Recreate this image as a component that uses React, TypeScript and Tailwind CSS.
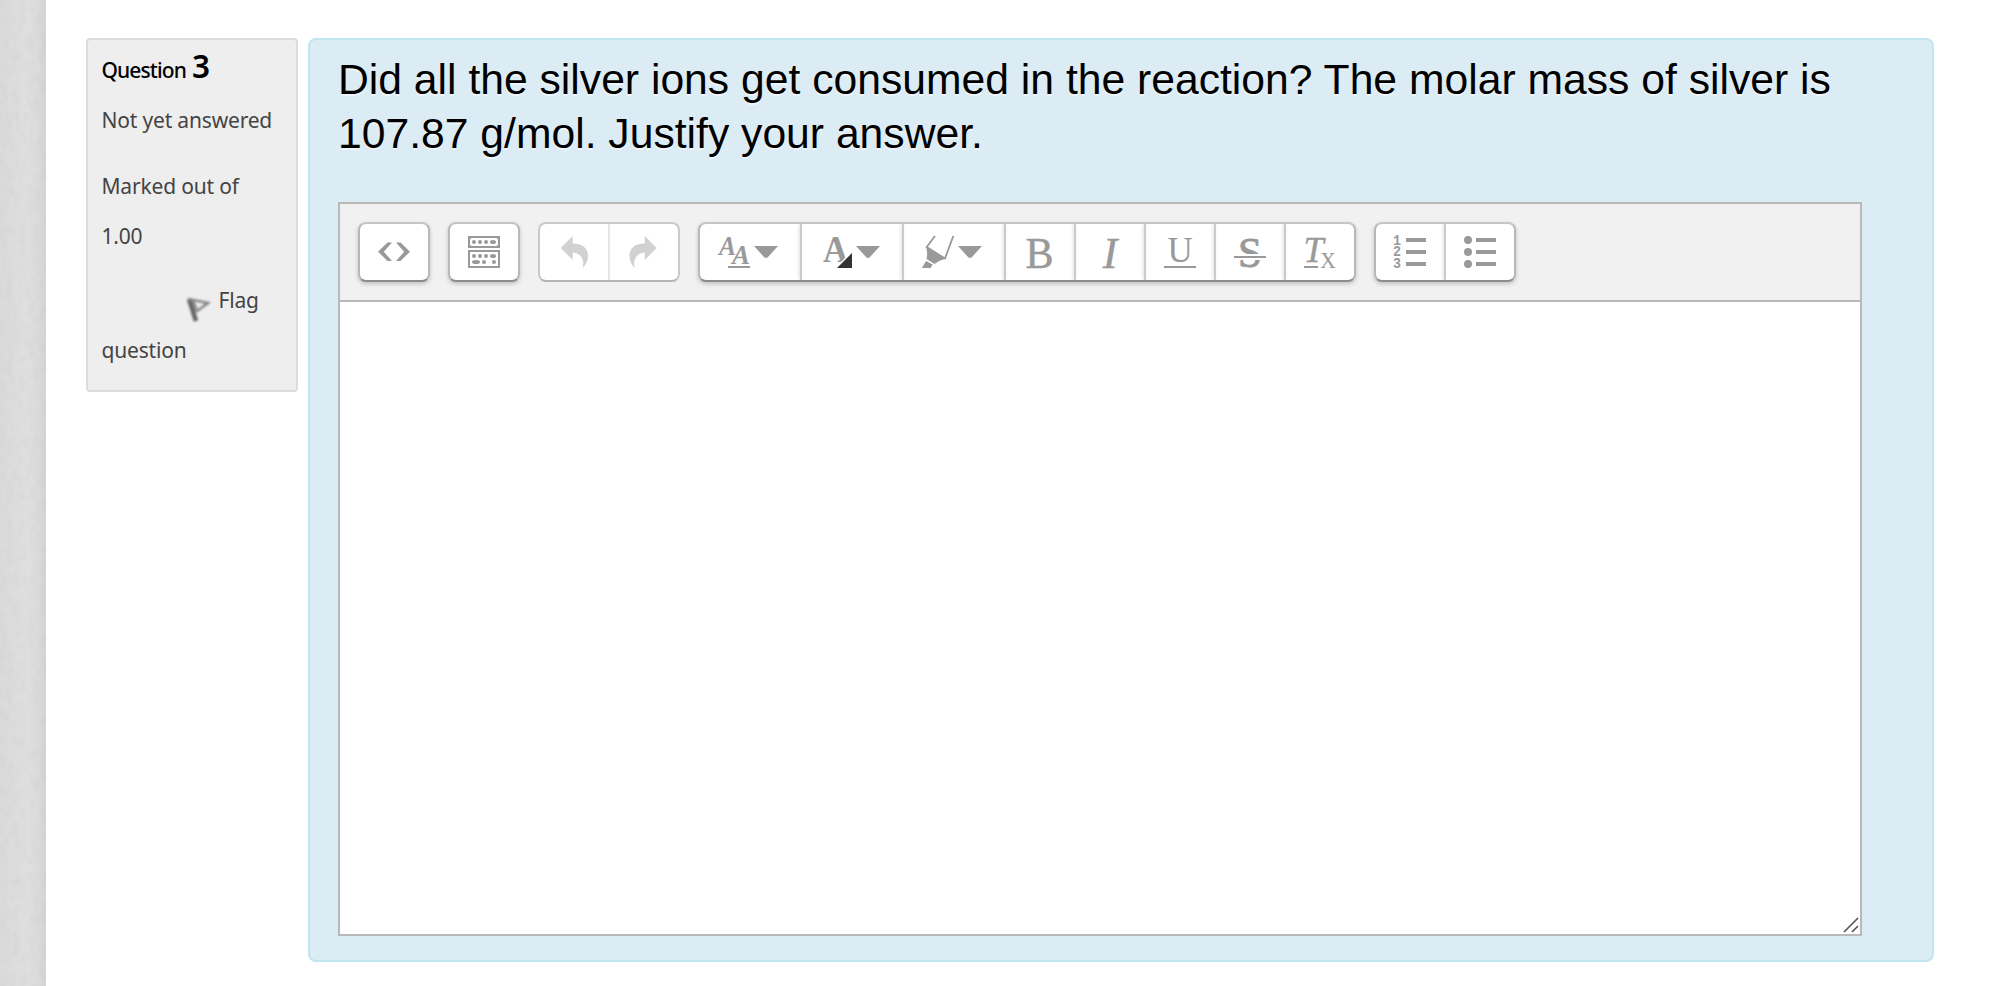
import type { ReactNode } from 'react'

// 按钮图标画布，坐标与按钮内部区域一致
function Icon({ wide, children }: { wide?: boolean; children: ReactNode }) {
  const width = wide ? 100 : 68
  return (
    <svg
      width={width}
      height={56}
      viewBox={`0 0 ${width} 56`}
      fill="currentColor"
      className="block font-['Liberation_Serif',serif]"
    >
      {children}
    </svg>
  )
}

const Caret = () => <path d="M54 22H78L68 33Q66 35 64 33Z" />

const undoPath = 'M20.7 24 32.7 12V19.5C42 19.5 48 24 48 32C48 37 45.5 41 42.7 44C44.5 36 42 29.5 32.7 28.5V36Z'

const CodeIcon = () => (
  <Icon>
    <path d="M18 27.7 27.5 18.5H32L23.8 27.7 32 37H27.5Z" />
    <path d="M50 27.7 40.5 18.5H36L44.2 27.7 36 37H40.5Z" />
  </Icon>
)

const ToggleIcon = () => (
  <Icon>
    <path fillRule="evenodd" d="M18 12H50V24H18ZM22 14Q20 14 20 16V20Q20 22 22 22H46Q48 22 48 20V16Q48 14 46 14Z" />
    <path fillRule="evenodd" d="M18 26H50V44H18ZM20 28V42H48V28Z" />
    <circle cx="24" cy="18" r="2" />
    <circle cx="30" cy="18" r="2" />
    <circle cx="36" cy="18" r="2" />
    <ellipse cx="43" cy="18" rx="3" ry="2" />
    <circle cx="24" cy="32" r="2" />
    <circle cx="30" cy="32" r="2" />
    <circle cx="36" cy="32" r="2" />
    <ellipse cx="43" cy="32" rx="3" ry="2" />
    <ellipse cx="26" cy="38" rx="4" ry="2" />
    <circle cx="34" cy="38" r="2" />
    <circle cx="44" cy="38" r="2" />
  </Icon>
)

const UndoIcon = () => (
  <Icon>
    <path d={undoPath} />
  </Icon>
)

const RedoIcon = () => (
  <Icon>
    <path d={undoPath} transform="translate(67.4 0) scale(-1 1)" />
  </Icon>
)

const FontSizeIcon = () => (
  <Icon wide>
    <text x="19" y="31" fontSize="28" fontWeight="bold" fontStyle="italic" textLength="17" lengthAdjust="spacingAndGlyphs">A</text>
    <text x="32" y="40" fontSize="28" fontWeight="bold" fontStyle="italic" textLength="18" lengthAdjust="spacingAndGlyphs">A</text>
    <path d="M28 42H50V44H28Z" />
    <Caret />
  </Icon>
)

const FontColorIcon = () => (
  <Icon wide>
    <text x="21" y="38" fontSize="37" fontWeight="bold" textLength="25" lengthAdjust="spacingAndGlyphs">A</text>
    <path fill="#fff" d="M33 44 50 27V44Z" />
    <path fill="#333" d="M35 44 50 29V44Z" />
    <Caret />
  </Icon>
)

const HighlightIcon = () => (
  <Icon wide>
    <path fill="none" stroke="currentColor" strokeWidth="1.8" d="M31 12 22.7 23 41 34.5 49.3 12" />
    <path d="M22 22.5 42 34.5Q36 36 30.5 40L22.5 35Q24 29 22 22.5Z" />
    <path d="M18 44 22 37 28.7 40.5 26.7 44Z" />
    <Caret />
  </Icon>
)

const BoldIcon = () => (
  <Icon>
    <text x="19.5" y="43.7" fontSize="44" textLength="28" lengthAdjust="spacingAndGlyphs" stroke="currentColor" strokeWidth="0.5">B</text>
  </Icon>
)

const ItalicIcon = () => (
  <Icon>
    <text x="26.8" y="43.7" fontSize="44" fontStyle="italic" stroke="currentColor" strokeWidth="0.4">I</text>
  </Icon>
)

const UnderlineIcon = () => (
  <Icon>
    <text x="21.5" y="37.5" fontSize="35">U</text>
    <path d="M18 42H50V44H18Z" />
  </Icon>
)

const StrikeIcon = () => (
  <Icon>
    <text x="22" y="43" fontSize="43" stroke="currentColor" strokeWidth="0.9">S</text>
    <path fill="#fff" d="M18 30H50V36H18Z" />
    <path d="M18 32H50V34H18Z" />
  </Icon>
)

const ClearIcon = () => (
  <Icon>
    <text x="17.5" y="38" fontSize="36" fontStyle="italic" stroke="currentColor" strokeWidth="0.4">T</text>
    <path d="M18 42H32V44H18Z" />
    <text x="34.3" y="44" fontSize="23" textLength="15.5" lengthAdjust="spacingAndGlyphs">X</text>
  </Icon>
)

const NumberedIcon = () => (
  <Icon>
    <g className="font-['Liberation_Mono',monospace] font-bold" fontSize="14">
      <text x="17" y="20.5" textLength="8" lengthAdjust="spacingAndGlyphs">1</text>
      <text x="17" y="32" textLength="8" lengthAdjust="spacingAndGlyphs">2</text>
      <text x="17" y="44" textLength="8" lengthAdjust="spacingAndGlyphs">3</text>
    </g>
    <path d="M30 14H50V18H30ZM30 26H50V30H30ZM30 38H50V42H30Z" />
  </Icon>
)

const BulletIcon = () => (
  <Icon>
    <circle cx="22" cy="16" r="4" />
    <circle cx="22" cy="28" r="4" />
    <circle cx="22" cy="40" r="4" />
    <path d="M30 14H50V18H30ZM30 26H50V30H30ZM30 38H50V42H30Z" />
  </Icon>
)

const groups = [
  { name: 'code', icons: [CodeIcon] },
  { name: 'toggle', icons: [ToggleIcon] },
  { name: 'history', icons: [UndoIcon, RedoIcon], disabled: true },
  {
    name: 'format',
    icons: [FontSizeIcon, FontColorIcon, HighlightIcon, BoldIcon, ItalicIcon, UnderlineIcon, StrikeIcon, ClearIcon],
  },
  { name: 'list', icons: [NumberedIcon, BulletIcon] },
]

function Toolbar() {
  return (
    <div className="flex h-[98px] gap-[18px] border-b-2 border-[#b9b9b9] bg-[#f1f1f1] pt-[18px] pl-[18px]">
      {groups.map(({ name, icons, disabled }) => (
        <div
          key={name}
          className={
            disabled
              ? 'flex h-[60px] overflow-hidden rounded-lg border-2 border-[#c9c9c9] border-b-[#b5b5b5] bg-white text-[#d1d1d1]'
              : 'flex h-[60px] overflow-hidden rounded-lg border-2 border-[#b8b8b8] border-t-[#c6c6c6] border-b-[#8c8c8c] bg-white text-[#999] shadow-[0_2px_4px_rgba(0,0,0,0.2)]'
          }
        >
          {icons.map((ButtonIcon, i) => (
            <button
              key={i}
              className={
                i === 0
                  ? 'block'
                  : disabled
                    ? 'block border-l-2 border-[#e6e6e6]'
                    : 'block border-l-2 border-[#cbcbcb] shadow-[0_0_4px_rgba(0,0,0,0.2)]'
              }
            >
              <ButtonIcon />
            </button>
          ))}
        </div>
      ))}
    </div>
  )
}

function FlagIcon() {
  return (
    <svg width="26" height="30" viewBox="0 0 26 30" fill="none" stroke="#888" className="ml-[83px] mt-5 shrink-0 blur-[0.8px]">
      <path d="M4 4 11 26" stroke="#666" strokeWidth="4.5" />
      <path d="M3 4 23 8 12 16 8 6" strokeWidth="2.6" />
    </svg>
  )
}

function QuestionInfo() {
  return (
    <div className="h-[354px] w-[212px] shrink-0 rounded border-2 border-[#dcdcdc] bg-[#eee] pt-[5px] pl-[13.5px] font-['Noto_Sans',sans-serif] text-[21px] leading-[50px] tracking-[-0.18px] whitespace-nowrap text-[#444]">
      <h3 className="-mt-1 mb-1 flex h-[50px] items-baseline gap-1.5 font-medium text-black">
        <span className="tracking-[-0.9px]">Question</span>
        <span className="text-[31.5px] tracking-normal font-semibold">3</span>
      </h3>
      <div>Not yet answered</div>
      <div className="mt-4">
        Marked out of
        <br />
        1.00
      </div>
      <div className="mt-3.5">
        <div className="flex h-[50px]">
          <FlagIcon />
          <span className="ml-2">Flag</span>
        </div>
        question
      </div>
    </div>
  )
}

export default function App() {
  return (
    <div className="flex h-[986px] w-[2012px] overflow-hidden bg-white">
      {/* 左侧纸纹背景 */}
      <svg width="46" height="986" className="shrink-0">
        <defs>
          <linearGradient id="edge">
            <stop offset="0" stopColor="#dadada" />
            <stop offset="0.6" stopColor="#dfdfdf" />
            <stop offset="0.85" stopColor="#dadada" />
            <stop offset="1" stopColor="#d4d4d4" />
          </linearGradient>
          <filter id="paper" x="0" y="0" width="100%" height="100%">
            <feTurbulence type="fractalNoise" baseFrequency="0.15 0.08" numOctaves="3" seed="4" />
            <feColorMatrix values="0 0 0 0 0  0 0 0 0 0  0 0 0 0 0  0.35 0 0 0 -0.12" />
          </filter>
        </defs>
        <rect width="46" height="986" fill="url(#edge)" />
        <rect width="46" height="986" filter="url(#paper)" opacity="0.12" />
      </svg>

      <main className="flex items-start gap-2.5 pt-[38px] pl-10">
        <QuestionInfo />

        <section className="h-[924px] w-[1626px] rounded-lg border-2 border-[#c0e7f0] bg-[#dcecf5] pt-3 pl-7">
          <p className="h-[150px] font-['Liberation_Sans',Arial,sans-serif] text-[42.67px] leading-[54px] whitespace-nowrap text-black [text-shadow:0_2px_0_rgba(255,255,255,0.5)]">
            Did all the silver ions get consumed in the reaction? The molar mass of silver is
            <br />
            107.87 g/mol. Justify your answer.
          </p>

          <div className="relative h-[734px] w-[1524px] border-2 border-[#b9b9b9] bg-white">
            <Toolbar />
            <svg width="16" height="16" viewBox="0 0 16 16" className="absolute right-px bottom-px" stroke="#555" strokeWidth="1.6">
              <path d="M1 15 15 1M9 15 15 9" />
            </svg>
          </div>
        </section>
      </main>
    </div>
  )
}
